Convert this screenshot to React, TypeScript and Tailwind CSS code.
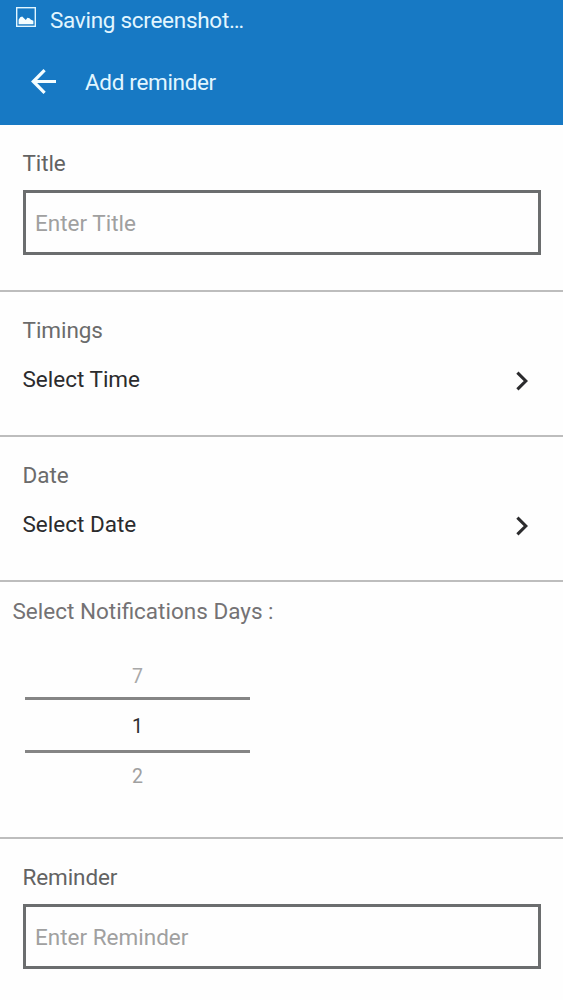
import { useState } from "react";

const DAYS = [1, 2, 3, 4, 5, 6, 7];

/* ─── Icons ─── */

function ImageIcon() {
  return (
    <svg width="20" height="20" viewBox="0 0 20 20" fill="none" className="shrink-0">
      <rect x="0.7" y="0.7" width="18.6" height="18.6" stroke="#e2f6ff" strokeWidth="1.4" />
      <path d="M2.6 17.2v-4.4l1.6-2.6 2-.6L9.8 13l1.6-2.2 2 .4 1.6 1.5 2.4 1.1v3.4z" fill="#f4fdff" />
    </svg>
  );
}

function BackIcon() {
  return (
    <svg width="25" height="25" viewBox="0 0 25 25" fill="none" stroke="#f4fdff" strokeWidth="3.2">
      <path d="M25 12.5H2.5M13.6 1.2L2.3 12.5l11.3 11.3" />
    </svg>
  );
}

function ChevronIcon() {
  return (
    <svg width="12" height="20" viewBox="0 0 12 20" fill="none" stroke="#2b2b2d" strokeWidth="3.1">
      <path d="M1.4 1.6L9.8 10l-8.4 8.4" />
    </svg>
  );
}

/* ─── Form parts ─── */

function TextField({ label, placeholder }: { label: string; placeholder: string }) {
  const [value, setValue] = useState("");
  return (
    <label className="block px-[22.5px]">
      <span className="block tracking-[-0.1px] text-[#636363]">{label}</span>
      <input
        value={value}
        onChange={e => setValue(e.target.value)}
        placeholder={placeholder}
        className="mt-[14px] block h-[65px] w-full border-3 border-[#6b6d6e] px-[9.5px] pt-px text-[#2b2b2d] outline-none placeholder:text-[#a0a0a0]"
      />
    </label>
  );
}

function PickerRow({ label, action }: { label: string; action: string }) {
  return (
    <section className="border-b-2 border-[#bdbdbd] px-[22.5px] pb-[43px] pt-[25px]">
      <p className="tracking-[-0.05px] text-[#6b6b6b]">{label}</p>
      <button className="mt-[23px] flex h-[26px] w-full items-center justify-between pr-[13px] text-[#2b2b2d]">
        <span>{action}</span>
        <span className="pt-1"><ChevronIcon /></span>
      </button>
    </section>
  );
}

function DayPicker() {
  const [index, setIndex] = useState(0);
  const prev = (index + DAYS.length - 1) % DAYS.length;
  const next = (index + 1) % DAYS.length;
  return (
    <div className="ml-[25px] mt-[38px] flex w-[225px] flex-col text-center text-[19.5px] leading-[24px]">
      <button onClick={() => setIndex(prev)} className="h-[35px] pb-[5px] text-[#a8a8a8]">{DAYS[prev]}</button>
      <div className="flex h-14 items-center justify-center border-y-3 border-[#858585] pt-[3px] text-[#2b2b2d]">{DAYS[index]}</div>
      <button onClick={() => setIndex(next)} className="h-[46px] pt-px text-[#a0a0a0]">{DAYS[next]}</button>
    </div>
  );
}

export default function App() {
  return (
    <div className="h-[1000px] w-full overflow-hidden bg-[#fefefe] font-['Roboto',sans-serif] text-[22.5px] leading-[26px]">
      <header className="h-[125px] bg-[#1779c4] text-[#e2f6ff]">
        <div className="flex items-start pl-4 pt-[7px]">
          <ImageIcon />
          <span className="ml-[14px] tracking-[-0.28px]">Saving screenshot…</span>
        </div>
        <div className="mt-9 flex items-start pl-[31px]">
          <BackIcon />
          <h1 className="ml-[29px] tracking-[-0.33px]">Add reminder</h1>
        </div>
      </header>

      <section className="h-[167px] border-b-2 border-[#bdbdbd] pt-[25px]">
        <TextField label="Title" placeholder="Enter Title" />
      </section>
      <PickerRow label="Timings" action="Select Time" />
      <PickerRow label="Date" action="Select Date" />
      <section className="h-[257px] border-b-2 border-[#bdbdbd] pt-4">
        <p className="pl-[12.5px] text-[#747274]">Select Notifications Days :</p>
        <DayPicker />
      </section>
      <section className="pt-[25px]">
        <TextField label="Reminder" placeholder="Enter Reminder" />
      </section>
    </div>
  );
}
